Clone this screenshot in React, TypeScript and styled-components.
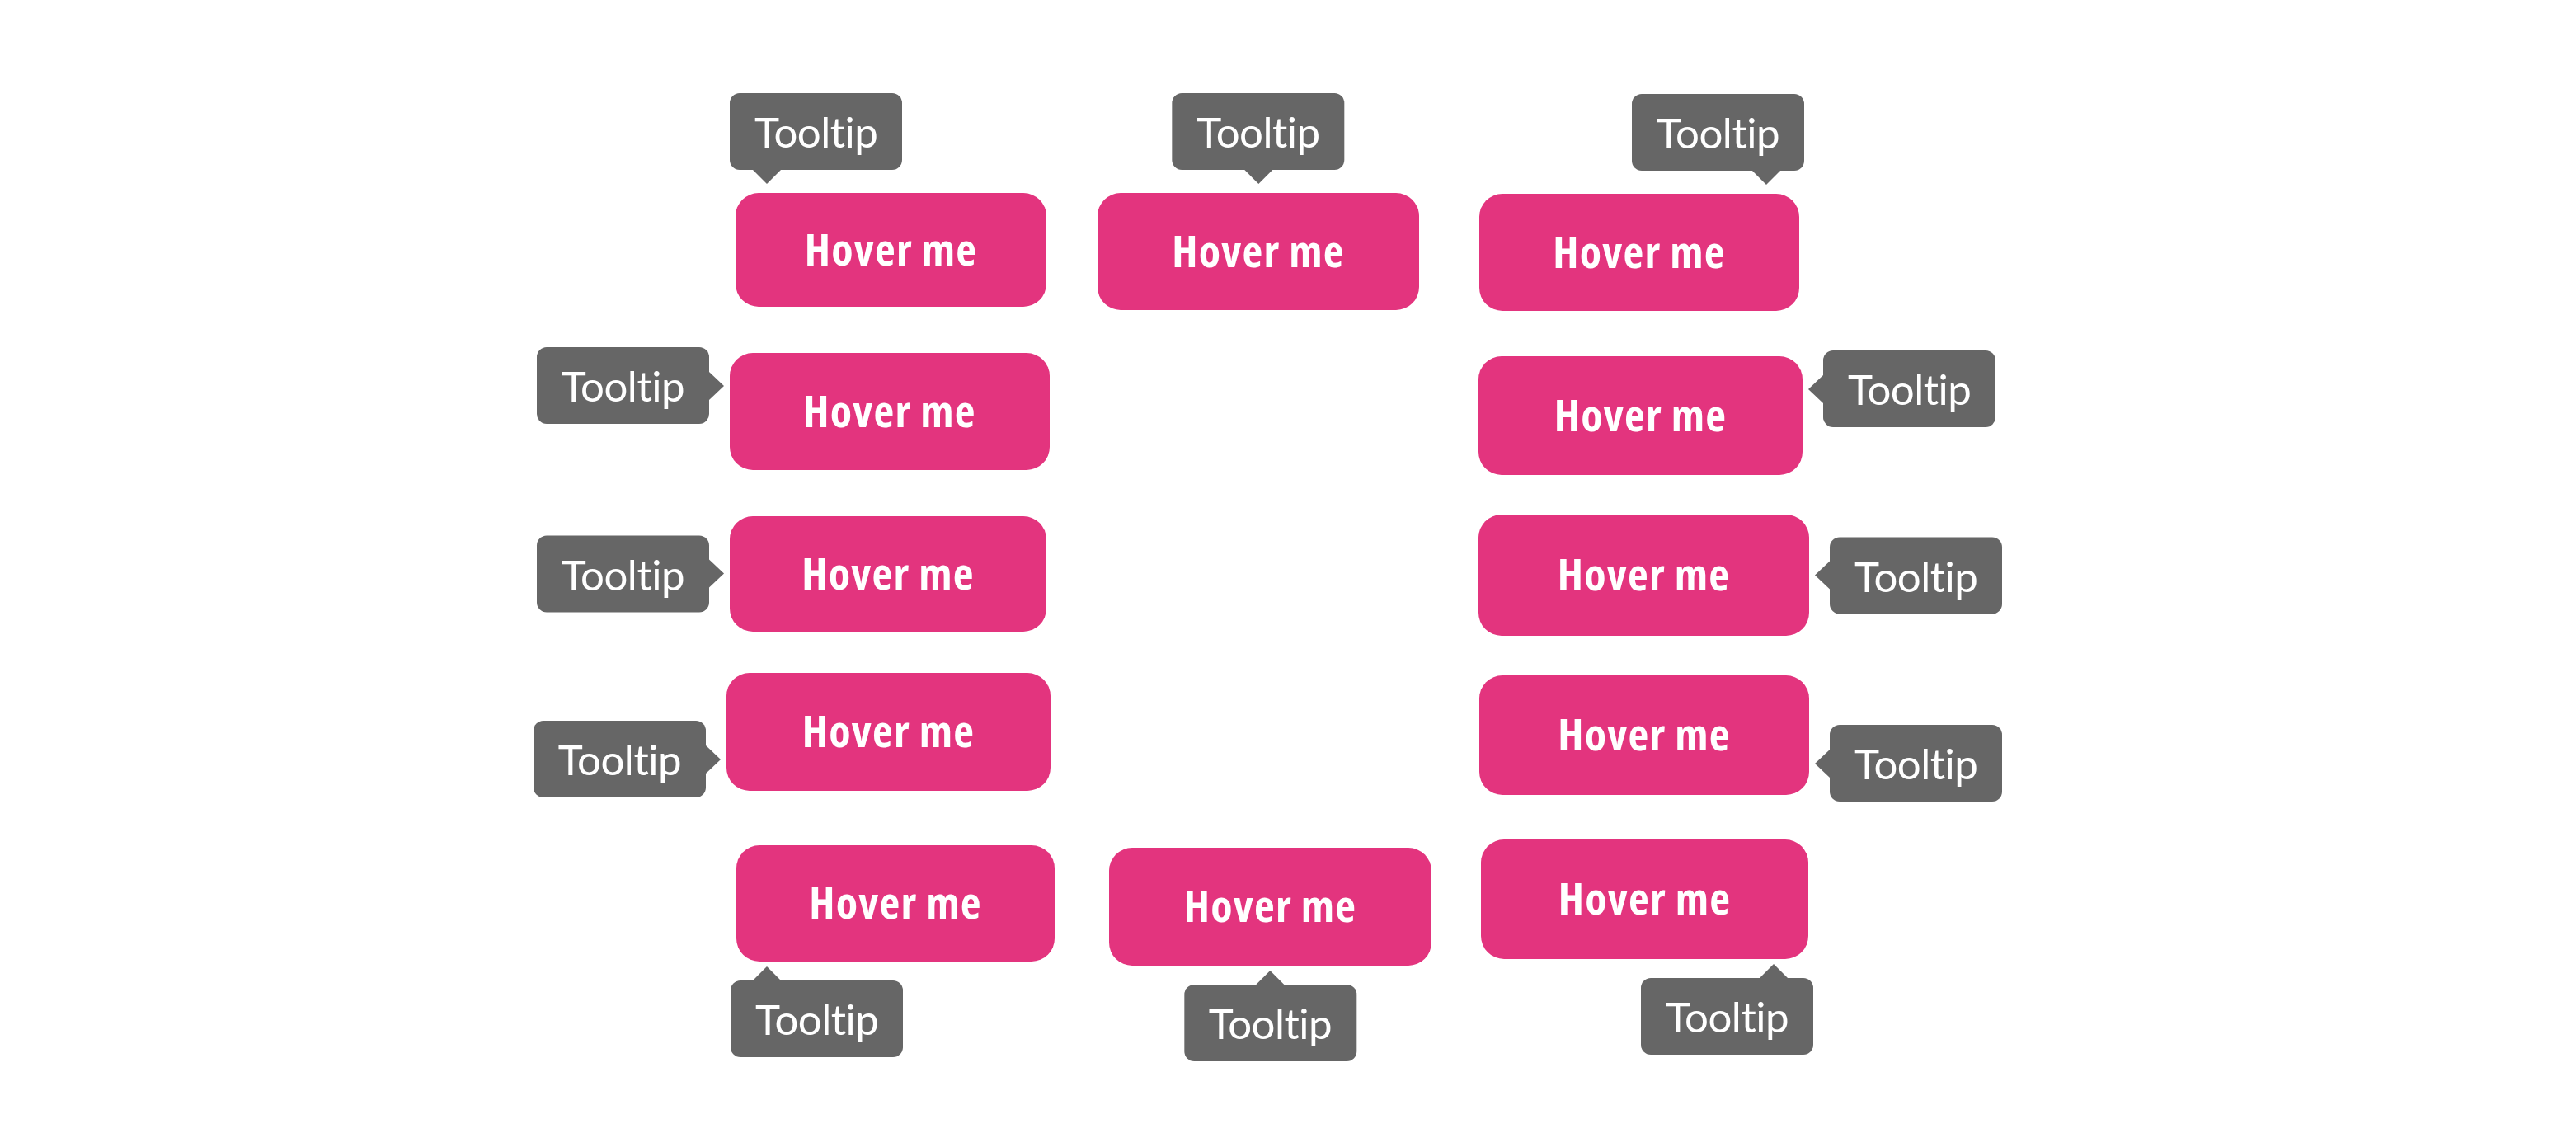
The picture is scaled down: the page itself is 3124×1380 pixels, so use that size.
import React from 'react';
import styled, { createGlobalStyle, css } from 'styled-components';

const GlobalStyle = createGlobalStyle`
  html, body { margin: 0; padding: 0; background: #ffffff; }
  body { font-family: Lato, "Open Sans", sans-serif; }
`;

type Side = 'top' | 'bottom' | 'left' | 'right';
type Align = 'start' | 'center' | 'end';

const PINK = '#e3347e';
const GREY = '#666666';

const Stage = styled.main`
  display: grid;
  grid-template-columns: 450px 462px 420px;
  grid-template-rows: 194px 196px 192px 202px auto;
  padding: 234px 0 0 881px;
  min-height: 1380px;
  box-sizing: border-box;
`;

const Anchor = styled.div<{ $row: number; $col: number; $nx: number; $ny: number }>`
  position: relative;
  grid-row: ${(p) => p.$row};
  grid-column: ${(p) => p.$col};
  justify-self: start;
  align-self: start;
  margin: ${(p) => p.$ny}px 0 0 ${(p) => p.$nx}px;
`;

const HoverButton = styled.button<{ $w: number; $h: number }>`
  width: ${(p) => p.$w}px;
  height: ${(p) => p.$h}px;
  display: flex;
  align-items: center;
  justify-content: center;
  padding: 0 0 5px;
  border: none;
  border-radius: 28px;
  background: ${PINK};
  color: #ffffff;
  font-family: "Open Sans", Lato, sans-serif;
  font-stretch: condensed;
  font-weight: 700;
  font-size: 54px;
  letter-spacing: 1.2px;
  line-height: 1;
  cursor: pointer;
`;

const placement = (side: Side, align: Align) => {
  if (side === 'top' || side === 'bottom') {
    const vertical = side === 'top' ? 'bottom: calc(100% + 28px);' : 'top: calc(100% + 23px);';
    const horizontal =
      align === 'start'
        ? 'left: -7px;'
        : align === 'end'
        ? 'right: -6px;'
        : 'left: 50%; transform: translateX(-50%);';
    return vertical + horizontal;
  }
  const horizontal = side === 'left' ? 'right: calc(100% + 25px);' : 'left: calc(100% + 25px);';
  const vertical =
    align === 'start'
      ? 'top: -7px;'
      : align === 'end'
      ? 'bottom: -8px;'
      : 'top: 50%; transform: translateY(-50%);';
  return horizontal + vertical;
};

const arrow = (side: Side, align: Align) => {
  switch (side) {
    case 'top':
      return css`
        top: 100%;
        border-left: 17px solid transparent;
        border-right: 17px solid transparent;
        border-top: 17px solid ${GREY};
        ${align === 'start' ? 'left: 28px;' : align === 'end' ? 'right: 29px;' : 'left: calc(50% - 17px);'}
      `;
    case 'bottom':
      return css`
        bottom: 100%;
        border-left: 17px solid transparent;
        border-right: 17px solid transparent;
        border-bottom: 17px solid ${GREY};
        ${align === 'start' ? 'left: 27px;' : align === 'end' ? 'right: 31px;' : 'left: calc(50% - 17px);'}
      `;
    case 'left':
      return css`
        left: 100%;
        border-top: 17.5px solid transparent;
        border-bottom: 17.5px solid transparent;
        border-left: 18px solid ${GREY};
        ${align === 'start' ? 'top: 29.5px;' : align === 'end' ? 'bottom: 29.5px;' : 'top: calc(50% - 17.5px);'}
      `;
    default:
      return css`
        right: 100%;
        border-top: 17.5px solid transparent;
        border-bottom: 17.5px solid transparent;
        border-right: 18px solid ${GREY};
        ${align === 'start' ? 'top: 29.5px;' : align === 'end' ? 'bottom: 29.5px;' : 'top: calc(50% - 17.5px);'}
      `;
  }
};

const Bubble = styled.div<{ $side: Side; $align: Align }>`
  position: absolute;
  box-sizing: border-box;
  height: 93px;
  padding: 0 30px;
  display: flex;
  align-items: center;
  background: ${GREY};
  color: #ffffff;
  border-radius: 12px;
  font-family: Lato, "Open Sans", sans-serif;
  font-weight: 400;
  font-size: 51px;
  letter-spacing: -0.5px;
  line-height: 1;
  white-space: nowrap;
  ${(p) => placement(p.$side, p.$align)}

  &::after {
    content: '';
    position: absolute;
    width: 0;
    height: 0;
    ${(p) => arrow(p.$side, p.$align)}
  }
`;

interface Item {
  row: number;
  col: number;
  nx: number;
  ny: number;
  w: number;
  h: number;
  side: Side;
  align: Align;
}

const items: Item[] = [
  { row: 1, col: 1, nx: 11, ny: 0, w: 377, h: 138, side: 'top', align: 'start' },
  { row: 1, col: 2, nx: 0, ny: 0, w: 390, h: 142, side: 'top', align: 'center' },
  { row: 1, col: 3, nx: 1, ny: 1, w: 388, h: 142, side: 'top', align: 'end' },
  { row: 2, col: 1, nx: 4, ny: 0, w: 388, h: 142, side: 'left', align: 'start' },
  { row: 2, col: 3, nx: 0, ny: 4, w: 393, h: 144, side: 'right', align: 'start' },
  { row: 3, col: 1, nx: 4, ny: 2, w: 384, h: 140, side: 'left', align: 'center' },
  { row: 3, col: 3, nx: 0, ny: 0, w: 401, h: 147, side: 'right', align: 'center' },
  { row: 4, col: 1, nx: 0, ny: 0, w: 393, h: 143, side: 'left', align: 'end' },
  { row: 4, col: 3, nx: 1, ny: 3, w: 400, h: 145, side: 'right', align: 'end' },
  { row: 5, col: 1, nx: 12, ny: 7, w: 386, h: 141, side: 'bottom', align: 'start' },
  { row: 5, col: 2, nx: 14, ny: 10, w: 391, h: 143, side: 'bottom', align: 'center' },
  { row: 5, col: 3, nx: 3, ny: 0, w: 397, h: 145, side: 'bottom', align: 'end' },
];

export default function App() {
  return (
    <>
      <GlobalStyle />
      <Stage>
        {items.map((it, i) => (
          <Anchor key={i} $row={it.row} $col={it.col} $nx={it.nx} $ny={it.ny}>
            <HoverButton $w={it.w} $h={it.h}>Hover me</HoverButton>
            <Bubble $side={it.side} $align={it.align} role="tooltip">
              Tooltip
            </Bubble>
          </Anchor>
        ))}
      </Stage>
    </>
  );
}
